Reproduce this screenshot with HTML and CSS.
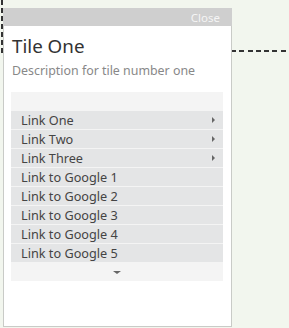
FILE: index.html
```html
<!doctype html>
<html lang="en">

<head>
    <meta charset="UTF-8">
    <title>Tile One</title>
    <link rel="stylesheet" href="styles.css">
</head>

<body>
    <div class="guide"></div>
    <div class="tile">
        <div class="tile-head">
            <a href="#" class="close">Close</a>
        </div>
        <div class="tile-body">
            <h2>Tile One</h2>
            <p class="desc">Description for tile number one</p>
            <div class="menu">
                <div class="menu-top"></div>
                <a href="#" class="item sub">Link One</a>
                <a href="#" class="item sub">Link Two</a>
                <a href="#" class="item sub">Link Three</a>
                <a href="#" class="item">Link to Google 1</a>
                <a href="#" class="item">Link to Google 2</a>
                <a href="#" class="item">Link to Google 3</a>
                <a href="#" class="item">Link to Google 4</a>
                <a href="#" class="item">Link to Google 5</a>
                <div class="menu-more"><span class="down"></span></div>
            </div>
        </div>
    </div>
</body>

</html>
```

FILE: styles.css
```css
html,
body {
    margin: 0;
    height: 100%;
}

body {
    background: #f2f6ee;
    font-family: 'Noto Sans', 'Open Sans', sans-serif;
    position: relative;
    overflow: hidden;
    padding: 8px 0 0 3px;
    box-sizing: border-box;
}

/* dashed connector lines behind the tile */
.guide {
    position: absolute;
    left: 1px;
    top: 0;
    width: 288px;
    height: 56px;
    background:
        repeating-linear-gradient(to bottom, #333 0 5px, transparent 5px 8px) left top / 2px 56px no-repeat,
        repeating-linear-gradient(to right, #333 0 5px, transparent 5px 8.3px) 230px 50px / 60px 2px no-repeat;
}

.tile {
    position: relative;
    width: 229px;
    height: 319px;
    box-sizing: border-box;
    background: #fff;
    border: 1px solid #c9cbc7;
    border-top: none;
}

.tile-head {
    height: 18px;
    background: #cfcfcf;
    margin: 0 -1px;
    display: flex;
    align-items: center;
    justify-content: flex-end;
    padding-right: 12px;
}

.close {
    color: #f5f5f5;
    font-size: 11.5px;
    text-decoration: none;
}

.tile-body {
    padding: 0 8px 0 7px;
}

.tile-body h2 {
    margin: 8px 0 0 1px;
    font-size: 18.8px;
    font-weight: 400;
    color: #333;
    line-height: 24px;
}

.desc {
    margin: 4px 0 0 1px;
    font-size: 12.4px;
    color: #888;
    line-height: 17px;
}

.menu {
    margin-top: 13px;
    background: #f4f4f4;
}

.menu-top {
    height: 19px;
}

.item {
    display: flex;
    align-items: center;
    justify-content: space-between;
    height: 18px;
    margin-bottom: 1px;
    padding: 0 8px 0 10px;
    background: #e4e5e6;
    color: #444;
    font-size: 12.7px;
    text-decoration: none;
}

.item.sub::after {
    content: '';
    border-left: 3px solid #666;
    border-top: 3px solid transparent;
    border-bottom: 3px solid transparent;
}

.menu-more {
    height: 18px;
    display: flex;
    align-items: center;
    justify-content: center;
}

.down {
    border-top: 3px solid #666;
    border-left: 4px solid transparent;
    border-right: 4px solid transparent;
}
```
